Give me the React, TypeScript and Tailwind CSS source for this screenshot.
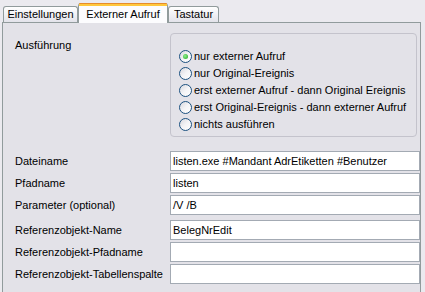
import React from "react";

const font = { fontFamily: '"Liberation Sans", Arial, sans-serif' };

function Radio({ label, checked }: { label: string; checked?: boolean }) {
  return (
    <div className="flex h-[17px] items-center gap-[2px]">
      <div className="relative flex h-[13px] w-[13px] items-center justify-center rounded-full border border-[#1c5180] bg-gradient-to-br from-[#d8d8de] via-[#f4f4f6] to-white">
        {checked && (
          <div className="h-[5px] w-[5px] rounded-full bg-[radial-gradient(circle_at_40%_40%,#8ef08e,#1fa51f)]" />
        )}
      </div>
      <span className="text-[11px] leading-[13px] text-black">{label}</span>
    </div>
  );
}

function Field({ label, value, extraTop }: { label: string; value: string; extraTop?: boolean }) {
  return (
    <div className={`flex h-[20px] items-center ${extraTop ? "mt-[5px]" : "mt-[2px]"}`}>
      <div className="w-[167px] pl-[12px] text-[11px] text-black">{label}</div>
      <div className="flex h-[20px] w-[250px] items-center border border-[#a3aab3] bg-white px-[2px] text-[11px] text-black">
        {value}
      </div>
    </div>
  );
}

export default function App() {
  return (
    <div className="h-[292px] w-[425px] overflow-hidden bg-[#ebeaef]" style={font}>
      {/* tab strip */}
      <div className="flex h-[22px] items-end pl-[3px]">
        <div className="flex h-[16px] w-[75px] items-center justify-center rounded-t-[3px] border border-b-0 border-[#919b9c] bg-gradient-to-b from-white to-[#e3e3ea] text-[11px] text-black">
          Einstellungen
        </div>
        <div className="relative z-10 -mb-px flex h-[20px] w-[90px] flex-col rounded-t-[3px] border-x border-[#919b9c] bg-[#fcfcfe]">
          <div className="h-[1px] rounded-t-[3px] bg-[#e68b2c]" />
          <div className="h-[2px] bg-[#ffc73c]" />
          <div className="flex flex-1 items-center justify-center pb-[1px] text-[11px] text-black">
            Externer Aufruf
          </div>
        </div>
        <div className="flex h-[16px] w-[51px] items-center justify-center rounded-t-[3px] border border-b-0 border-[#919b9c] bg-gradient-to-b from-white to-[#e3e3ea] text-[11px] text-black">
          Tastatur
        </div>
      </div>
      {/* panel */}
      <div className="ml-[2px] h-[270px] w-[419px] border-x border-t border-[#919b9c] bg-[#e3e2e8] pt-[10px]">
        <div className="flex">
          <div className="w-[167px] pl-[12px] pt-[4px] text-[11px] text-black">Ausführung</div>
          <div className="w-[247px] rounded-[4px] border border-[#c4c3cc] pb-[3px] pl-[8px] pt-[14px]">
            <Radio label="nur externer Aufruf" checked />
            <Radio label="nur Original-Ereignis" />
            <Radio label="erst externer Aufruf - dann Original Ereignis" />
            <Radio label="erst Original-Ereignis - dann externer Aufruf" />
            <Radio label="nichts ausführen" />
          </div>
        </div>
        <div className="mt-[14px]">
          <Field label="Dateiname" value="listen.exe #Mandant AdrEtiketten #Benutzer" />
          <Field label="Pfadname" value="listen" />
          <Field label="Parameter (optional)" value="/V /B" />
          <Field label="Referenzobjekt-Name" value="BelegNrEdit" extraTop />
          <Field label="Referenzobjekt-Pfadname" value="" />
          <Field label="Referenzobjekt-Tabellenspalte" value="" />
        </div>
      </div>
    </div>
  );
}
